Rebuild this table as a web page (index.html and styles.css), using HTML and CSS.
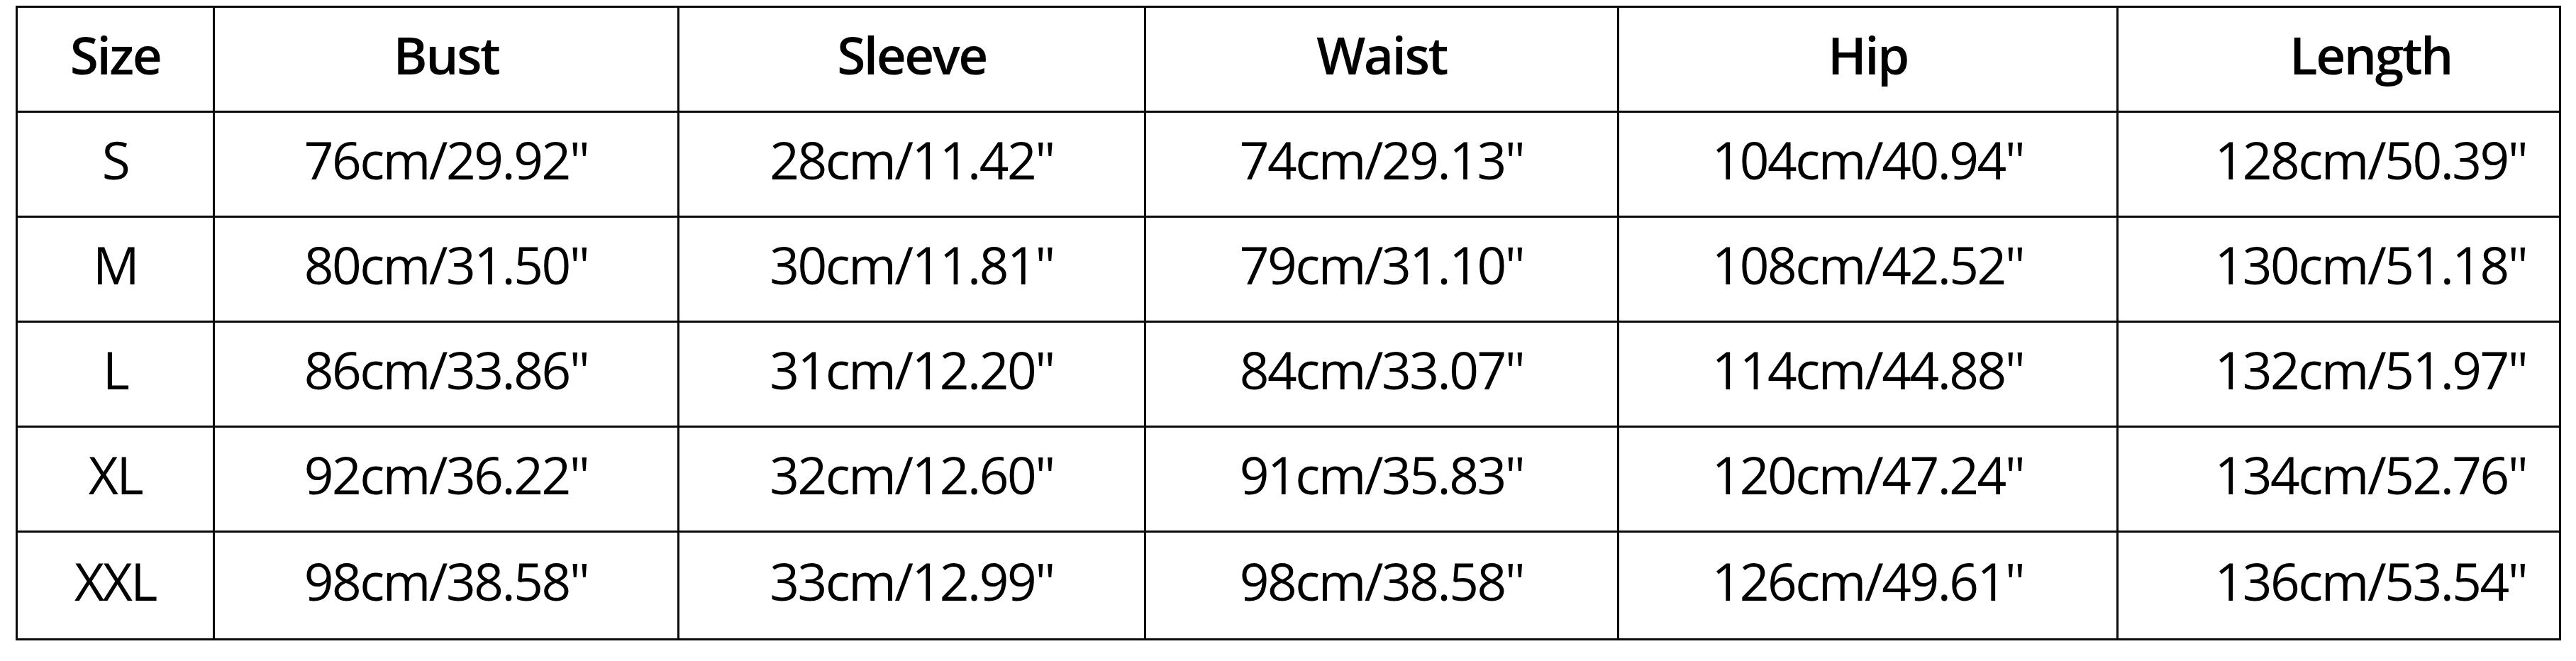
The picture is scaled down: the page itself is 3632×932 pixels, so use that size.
FILE: index.html
```html
<!DOCTYPE html>
<html>
<head>
<meta charset="utf-8">
<link rel="stylesheet" href="styles.css">
</head>
<body>
<div class="page">
<table class="size-table">
<colgroup>
<col class="c-size"><col class="c-bust"><col class="c-sleeve"><col class="c-waist"><col class="c-hip"><col class="c-length">
</colgroup>
<thead>
<tr><th>Size</th><th>Bust</th><th>Sleeve</th><th>Waist</th><th>Hip</th><th class="len">Length</th></tr>
</thead>
<tbody>
<tr><td>S</td><td>76cm/29.92"</td><td>28cm/11.42"</td><td>74cm/29.13"</td><td>104cm/40.94"</td><td class="len">128cm/50.39"</td></tr>
<tr><td>M</td><td>80cm/31.50"</td><td>30cm/11.81"</td><td>79cm/31.10"</td><td>108cm/42.52"</td><td class="len">130cm/51.18"</td></tr>
<tr><td>L</td><td>86cm/33.86"</td><td>31cm/12.20"</td><td>84cm/33.07"</td><td>114cm/44.88"</td><td class="len">132cm/51.97"</td></tr>
<tr><td>XL</td><td>92cm/36.22"</td><td>32cm/12.60"</td><td>91cm/35.83"</td><td>120cm/47.24"</td><td class="len">134cm/52.76"</td></tr>
<tr class="last"><td>XXL</td><td>98cm/38.58"</td><td>33cm/12.99"</td><td>98cm/38.58"</td><td>126cm/49.61"</td><td class="len">136cm/53.54"</td></tr>
</tbody>
</table>
</div>
</body>
</html>
```

FILE: styles.css
```css
html, body {
  margin: 0;
  padding: 0;
  background: #fff;
}
.page {
  padding: 8px 0 0 22px;
}
.size-table {
  border-collapse: collapse;
  table-layout: fixed;
  width: 3586px;
  font-family: "Open Sans", "Noto Sans", sans-serif;
  color: #000;
  border: 3px solid #0a0a0a;
}
.c-size { width: 278px; }
.c-bust { width: 655px; }
.c-sleeve { width: 658px; }
.c-waist { width: 667px; }
.c-hip { width: 704px; }
.c-length { width: 624px; }
.size-table tr {
  height: 148px;
}
.size-table tr.last {
  height: 152px;
}
.size-table th,
.size-table td {
  border: 3px solid #0a0a0a;
  text-align: center;
  vertical-align: middle;
  padding: 0 0 14px 0;
  font-size: 73px;
  line-height: 1;
  letter-spacing: -2.5px;
  white-space: nowrap;
}
.size-table th {
  font-weight: 600;
}
.size-table td {
  font-weight: 500;
}
.size-table .len {
  padding-left: 90px;
}
```
